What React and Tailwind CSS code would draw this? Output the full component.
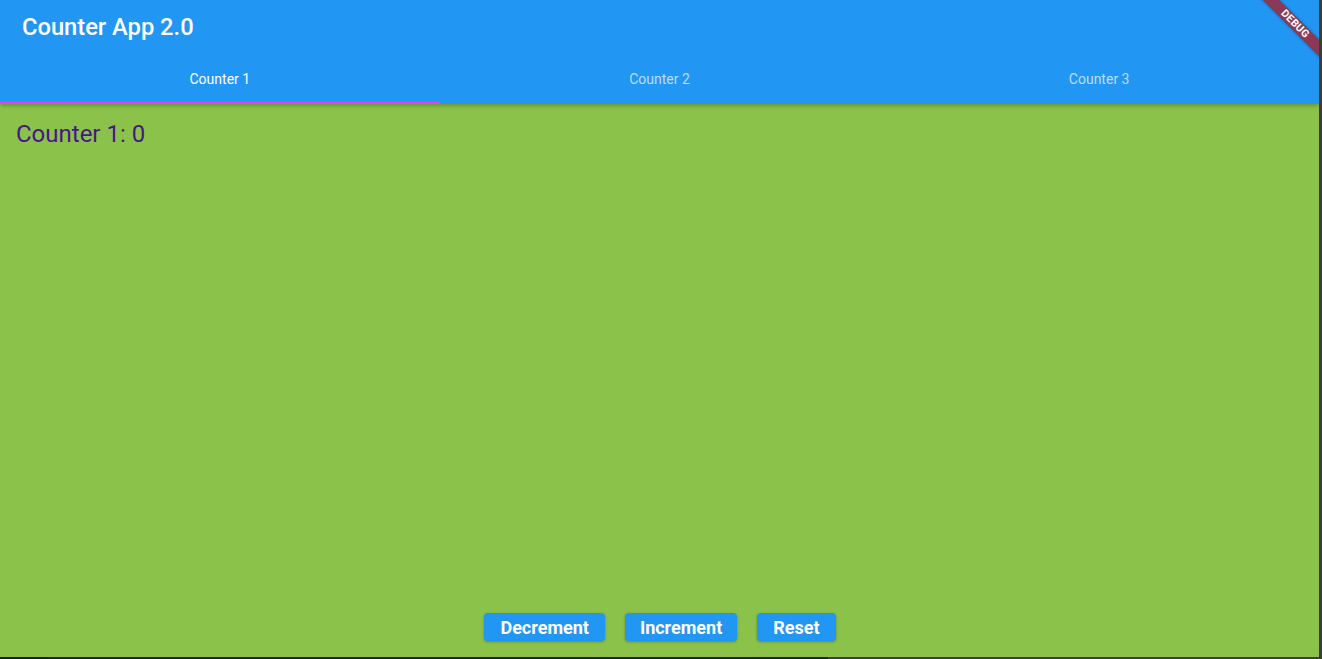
export default function App() {
  const tabs = ["Counter 1", "Counter 2", "Counter 3"];
  return (
    <div className="w-[1322px] h-[659px] bg-[#3c3c3c] flex flex-col overflow-hidden" style={{ fontFamily: "Roboto, 'Noto Sans', sans-serif" }}>
      <div className="flex flex-1 min-h-0">
        <div className="relative w-[1319px] h-[657px] flex flex-col overflow-hidden bg-[#8bc34a]">
          <header className="relative z-10 bg-[#2196f3] shadow-[0_2px_4px_rgba(0,0,0,0.25)]">
            <div className="h-[56px] flex items-center px-[22px]">
              <h1 className="text-white text-[23.7px] font-medium leading-none">Counter App 2.0</h1>
            </div>
            <div className="h-[48px] grid grid-cols-3">
              {tabs.map((t, i) => (
                <div key={t} className="relative flex items-center justify-center pb-[2px]">
                  <span className={i === 0 ? "text-white text-[14px]" : "text-white/70 text-[14px]"}>{t}</span>
                  {i === 0 && <div className="absolute left-0 right-0 bottom-0 h-[2px] bg-[#e040fb]" />}
                </div>
              ))}
            </div>
          </header>
          <main className="flex-1 flex flex-col">
            <div className="px-4 pt-[14px]">
              <p className="text-[24px] leading-[32px] text-[#4a148c]">Counter 1: 0</p>
            </div>
            <div className="flex-1" />
            <div className="flex justify-center gap-5 pb-4 pl-[1px]">
              <button className="h-[28px] px-4 rounded-[4px] bg-[#2196f3] text-white text-[18px] font-bold shadow-[0_1px_3px_rgba(0,0,0,0.3)]">Decrement</button>
              <button className="h-[28px] px-[15px] rounded-[4px] bg-[#2196f3] text-white text-[18px] font-bold shadow-[0_1px_3px_rgba(0,0,0,0.3)]">Increment</button>
              <button className="h-[28px] px-4 rounded-[4px] bg-[#2196f3] text-white text-[18px] font-bold shadow-[0_1px_3px_rgba(0,0,0,0.3)]">Reset</button>
            </div>
          </main>
          <div className="absolute z-20 left-[1235px] top-[18px] w-[120px] h-[12px] rotate-45 bg-[#8a3a56] shadow-[0_0_3px_rgba(0,0,0,0.3)] flex items-center justify-center">
            <span className="text-white text-[10.5px] font-bold leading-none tracking-[0.3px]">DEBUG</span>
          </div>
        </div>
      </div>
      <div className="h-[2px] flex">
        <div className="w-[48px] bg-[#1e1e1e]" />
        <div className="w-[780px] bg-[#232323]" />
        <div className="flex-1 bg-[#3c3c3c]" />
      </div>
    </div>
  );
}
